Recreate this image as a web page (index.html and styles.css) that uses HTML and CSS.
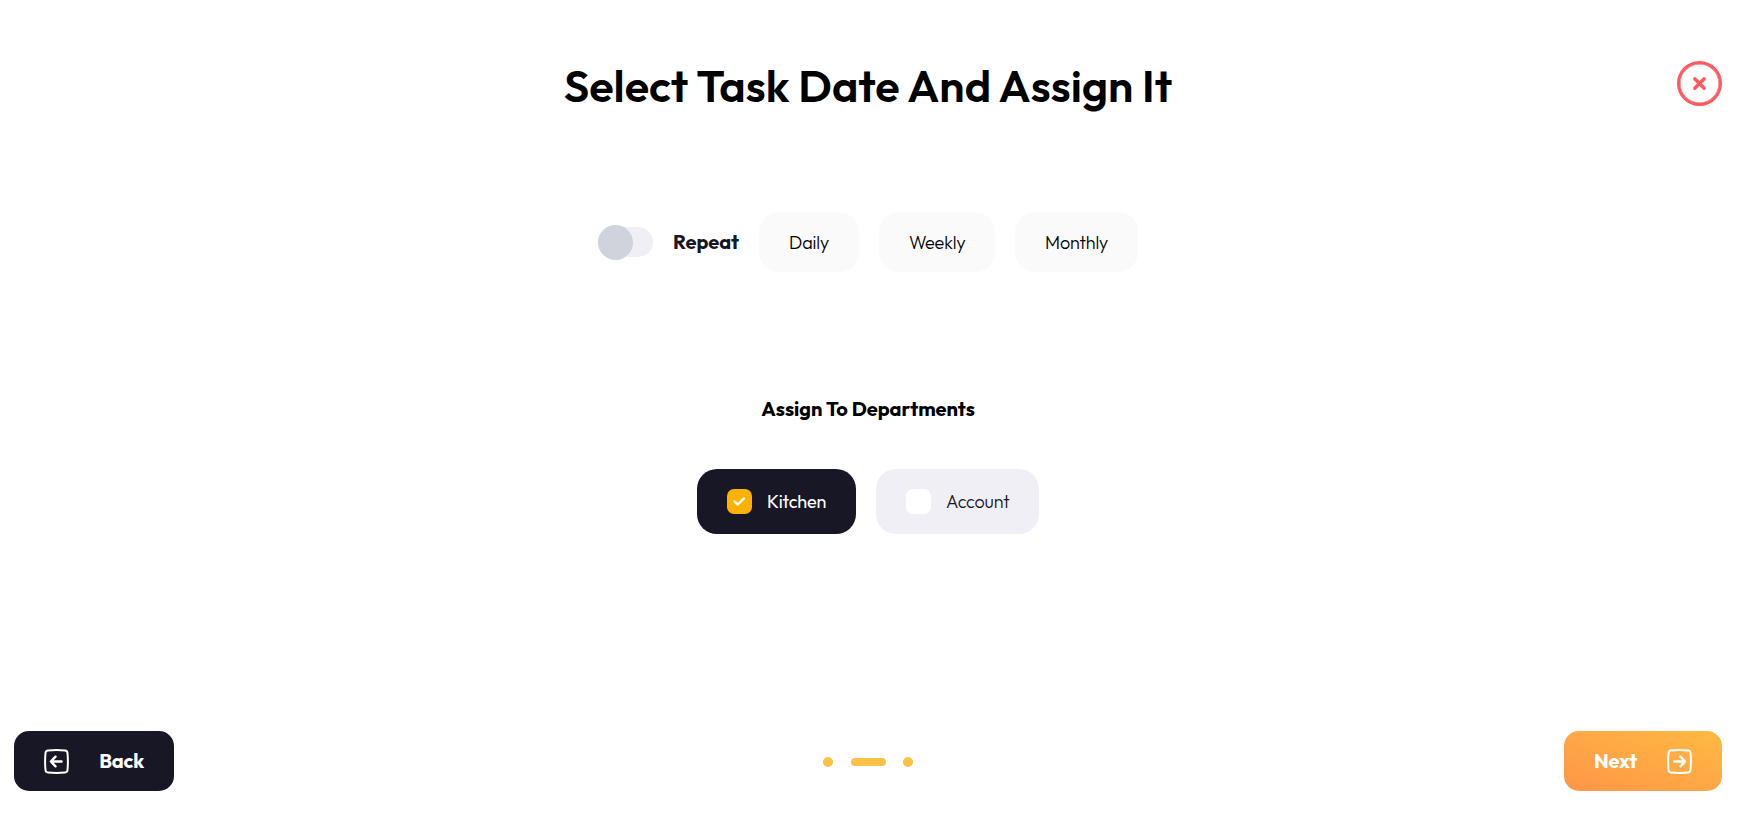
FILE: index.html
```html
<!DOCTYPE html>
<html lang="en">
<head>
<meta charset="utf-8">
<title>Select Task Date</title>
<link rel="stylesheet" href="styles.css">
</head>
<body>
<main class="page">
  <header class="header">
    <h1 class="title"><span class="title-text">Select Task Date And Assign It</span></h1>
    <button class="close" aria-label="Close">
      <svg width="15" height="15" viewBox="0 0 15 15"><path d="M2.8 2.8l9.4 9.4M12.2 2.8l-9.4 9.4" stroke="#ff5a5f" stroke-width="3.4" stroke-linecap="round"/></svg>
    </button>
  </header>
  <section class="repeat">
    <div class="toggle"><div class="knob"></div></div>
    <span class="repeat-label">Repeat</span>
    <button class="period daily"><span>Daily</span></button>
    <button class="period weekly"><span>Weekly</span></button>
    <button class="period monthly"><span>Monthly</span></button>
  </section>
  <h2 class="subtitle"><span>Assign To Departments</span></h2>
  <section class="departments">
    <div class="dept kitchen">
      <div class="check checked"><svg width="25" height="25" viewBox="0 0 25 25" fill="none"><path d="M7.6 12.6l3.2 2.9 6.1-6.1" stroke="#fff" stroke-width="2.4" stroke-linecap="round" stroke-linejoin="round"/></svg></div>
      <span>Kitchen</span>
    </div>
    <div class="dept account">
      <div class="check"></div>
      <span>Account</span>
    </div>
  </section>
  <footer class="footer">
    <button class="nav back">
      <svg width="25" height="25" viewBox="0 0 25 25" fill="none" stroke="#fff" stroke-linecap="round" stroke-linejoin="round"><path d="M4 1.5Q12.5 .7 21 1.5Q23.3 1.7 23.5 4Q24.3 12.5 23.5 21Q23.3 23.3 21 23.5Q12.5 24.3 4 23.5Q1.7 23.3 1.5 21Q.7 12.5 1.5 4Q1.7 1.7 4 1.5Z" stroke-width="2"/><path d="M17.6 12.5H7.5M11.5 7.7l-4.6 4.8 4.6 4.8" stroke-width="2.4"/></svg>
      <span>Back</span>
    </button>
    <div class="steps"><i class="dot"></i><i class="bar"></i><i class="dot"></i></div>
    <button class="nav next">
      <span>Next</span>
      <svg width="25" height="25" viewBox="0 0 25 25" fill="none" stroke="#fff" stroke-linecap="round" stroke-linejoin="round"><path d="M4 1.5Q12.5 .7 21 1.5Q23.3 1.7 23.5 4Q24.3 12.5 23.5 21Q23.3 23.3 21 23.5Q12.5 24.3 4 23.5Q1.7 23.3 1.5 21Q.7 12.5 1.5 4Q1.7 1.7 4 1.5Z" stroke-width="2"/><path d="M7.4 12.5h10.1M13.5 7.7l4.6 4.8-4.6 4.8" stroke-width="2.4"/></svg>
    </button>
  </footer>
</main>
</body>
</html>
```
FILE: styles.css
```css
* { box-sizing: border-box; }
body { margin: 0; background: #fff; color: #000; font-family: Outfit, Lato, sans-serif; }
button { border: 0; margin: 0; padding: 0; background: none; font: inherit; color: inherit; }
svg { display: block; flex: none; }
span { white-space: nowrap; }
.page { height: 816px; padding: 61px 24px 25px 14px; display: flex; flex-direction: column; }
.header { display: grid; grid-template-columns: 45px 1fr 45px; height: 45px; }
.title { grid-column: 2; margin: 0; text-align: center; font-size: 45px; line-height: 50px; font-weight: 600; }
.close { width: 45px; height: 45px; border: 3.5px solid #ff5a5f; border-radius: 50%; display: flex; align-items: center; justify-content: center; box-shadow: inset 0 0 0 .5px #ff5a5f; }
.repeat { margin-top: 106px; height: 60px; display: flex; justify-content: center; align-items: center; gap: 20px; }
.toggle { width: 55px; height: 30px; border-radius: 15px; background: #f0eff5; display: flex; align-items: center; }
.knob { width: 35px; height: 35px; flex: none; border-radius: 50%; background: #d0d3dc; }
.repeat-label { width: 66px; padding-bottom: 2px; font-size: 20px; font-weight: 700; letter-spacing: -.05px; color: #181725; }
.period { height: 60px; padding: 1px 0 0 30px; border-radius: 20px; background: #fafafa; font-size: 18px; font-weight: 300; letter-spacing: -.15px; text-align: left; color: #000; }
.daily { width: 100px; }
.weekly { width: 116px; }
.monthly { width: 123px; }
.subtitle { margin: 124px 0 0; height: 25px; line-height: 25px; text-align: center; font-size: 20px; font-weight: 700; }
.departments { margin-top: 48px; display: flex; justify-content: center; gap: 20px; }
.dept { height: 65px; padding-left: 30px; border-radius: 20px; display: flex; align-items: center; gap: 15px; font-size: 18px; font-weight: 300; letter-spacing: -.2px; }
.kitchen { width: 159px; background: #181725; color: #fff; font-weight: 400; }
.account { width: 163px; background: #f0eff5; color: #181725; }
.check { width: 25px; height: 25px; border-radius: 7px; background: #fff; }
.checked { background: #ffb100; }
.footer { margin-top: auto; display: grid; grid-template-columns: 160px 1fr 158px; align-items: center; }
.nav { height: 60px; padding: 0 30px; border-radius: 15px; display: flex; align-items: center; justify-content: space-between; font-size: 20px; font-weight: 700; letter-spacing: -.2px; color: #fff; }
.nav span { padding-bottom: 2px; }
.back { background: #181725; }
.next { background: linear-gradient(20deg, #ff9549, #ffba42); }
.steps { display: flex; align-items: center; justify-content: center; gap: 17.5px; padding: 1px 1.4px 0 0; }
.dot { width: 10px; height: 10px; border-radius: 50%; background: #ffc047; }
.bar { width: 35px; height: 8px; border-radius: 4px; background: #ffc047; }
```
